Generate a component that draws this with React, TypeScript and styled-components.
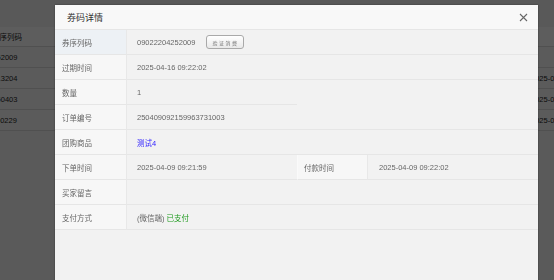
import styled, { createGlobalStyle } from "styled-components";

const GlobalStyle = createGlobalStyle`
  html, body {
    margin: 0;
    padding: 0;
    width: 554px;
    height: 280px;
    overflow: hidden;
    background: #e2e2e2;
    font-family: "Liberation Sans", "Noto Sans CJK SC", sans-serif;
  }
`;

interface BgRow {
  code: string;
  date?: string;
}

const bgRows: BgRow[] = [
  { code: "09022204252009" },
  { code: "25040909213204", date: "2025-04-09" },
  { code: "25040822150403", date: "2025-04-08" },
  { code: "25033118400229", date: "2025-03-31" },
];

export default function App() {
  return (
    <>
      <GlobalStyle />
      <Page>
        <TopBar />
        <BgTable>
          <BgHead>
            <BgHeadCell>券序列码</BgHeadCell>
            <BgCell />
            <BgCell />
          </BgHead>
          {bgRows.map((r) => (
            <BgLine key={r.code}>
              <BgCell>{r.code}</BgCell>
              <BgCell />
              <BgCell>{r.date ? r.date + " 09:21:59" : ""}</BgCell>
            </BgLine>
          ))}
        </BgTable>
      </Page>
      <Overlay />
      <Modal>
        <Header>
          <Title>券码详情</Title>
          <Close aria-label="close">
            <svg width="9" height="9" viewBox="0 0 9 9">
              <path d="M1 1L8 8M8 1L1 8" stroke="#666" strokeWidth="1.1" />
            </svg>
          </Close>
        </Header>
        <Grid>
          <Label $tint>券序列码</Label>
          <Value $wide>
            09022204252009
            <VerifyBtn>验证消费</VerifyBtn>
          </Value>

          <Label>过期时间</Label>
          <Value $wide>2025-04-16 09:22:02</Value>

          <Label>数量</Label>
          <Value>1</Value>
          <Blank />

          <Label>订单编号</Label>
          <Value $wide>250409092159963731003</Value>

          <Label>团购商品</Label>
          <Value $wide>
            <Link>测试4</Link>
          </Value>

          <Label>下单时间</Label>
          <Value>2025-04-09 09:21:59</Value>
          <Label $side>付款时间</Label>
          <Value $pad={11}>2025-04-09 09:22:02</Value>

          <Label>买家留言</Label>
          <Value $wide />

          <Label>支付方式</Label>
          <Value $wide>
            (微信端)&nbsp;<Paid>已支付</Paid>
          </Value>
        </Grid>
      </Modal>
    </>
  );
}

const Page = styled.div`
  width: 554px;
  height: 280px;
  background: #e2e2e2;
  overflow: hidden;
`;

const TopBar = styled.div`
  height: 27px;
  background: #dedede;
`;

const BgTable = styled.div`
  margin-left: -50px;
  margin-right: -91px;
  font-size: 7.5px;
  color: #222;
`;

const BgHead = styled.div`
  display: grid;
  grid-template-columns: 110px 1fr 120px;
  height: 19px;
  align-items: center;
  border-bottom: 1px solid #c8c8c8;
  background: #e8e8e8;
`;

const BgLine = styled.div`
  display: grid;
  grid-template-columns: 110px 1fr 120px;
  height: 20px;
  align-items: center;
  border-bottom: 1px solid #c8c8c8;
  background: #e4e4e4;
`;

const BgHeadCell = styled.div`
  padding-left: 42px;
`;

const BgCell = styled.div`
  padding-left: 9px;
  white-space: nowrap;
  & + & + & {
    padding-left: 6px;
  }
`;

const Overlay = styled.div`
  position: fixed;
  inset: 0;
  background: rgba(0, 0, 0, 0.6);
`;

const Modal = styled.div`
  position: fixed;
  left: 55px;
  top: 5px;
  width: 483px;
  height: 310px;
  background: #f2f2f2;
  box-shadow: 0 0 2px rgba(0, 0, 0, 0.4);
`;

const Header = styled.div`
  display: flex;
  align-items: center;
  justify-content: space-between;
  height: 24px;
  padding: 0 10px 0 12px;
  background: #f8f8f8;
  border-bottom: 1px solid #e6e6e6;
`;

const Title = styled.div`
  font-size: 9px;
  color: #333;
`;

const Close = styled.button`
  display: flex;
  border: 0;
  padding: 0;
  background: none;
  cursor: pointer;
`;

const Grid = styled.div`
  display: grid;
  grid-template-columns: 72px 170px 71px 1fr;
  grid-auto-rows: 25px;
  font-size: 7.5px;
  color: #666;
`;

const Label = styled.div<{ $tint?: boolean; $side?: boolean }>`
  display: flex;
  align-items: center;
  padding-left: ${(p) => (p.$side ? 6 : 7)}px;
  background: ${(p) => (p.$tint ? "#edf1f5" : "#f7f7f7")};
  border-bottom: 1px solid #e6e6e6;
  border-right: 1px solid #e8e8e8;
  ${(p) => p.$side && "border-left: 1px solid #fafafa;"}
`;

const Value = styled.div<{ $wide?: boolean; $pad?: number }>`
  display: flex;
  align-items: center;
  padding-left: ${(p) => p.$pad ?? 10}px;
  grid-column: ${(p) => (p.$wide ? "2 / -1" : "auto")};
  border-bottom: 1px solid #e6e6e6;
  white-space: nowrap;
`;

const Blank = styled.div`
  grid-column: 3 / -1;
`;

const VerifyBtn = styled.button`
  margin-left: 11px;
  width: 38px;
  height: 14px;
  padding: 0;
  border: 1px solid #a9a9a9;
  border-radius: 3px;
  background: linear-gradient(#ffffff, #e9e9e9);
  font-family: "Noto Sans CJK SC", sans-serif;
  font-size: 5px;
  letter-spacing: 1.5px;
  color: #777;
`;

const Link = styled.span`
  color: #2a1aff;
`;

const Paid = styled.span`
  color: #1e9a1e;
`;
